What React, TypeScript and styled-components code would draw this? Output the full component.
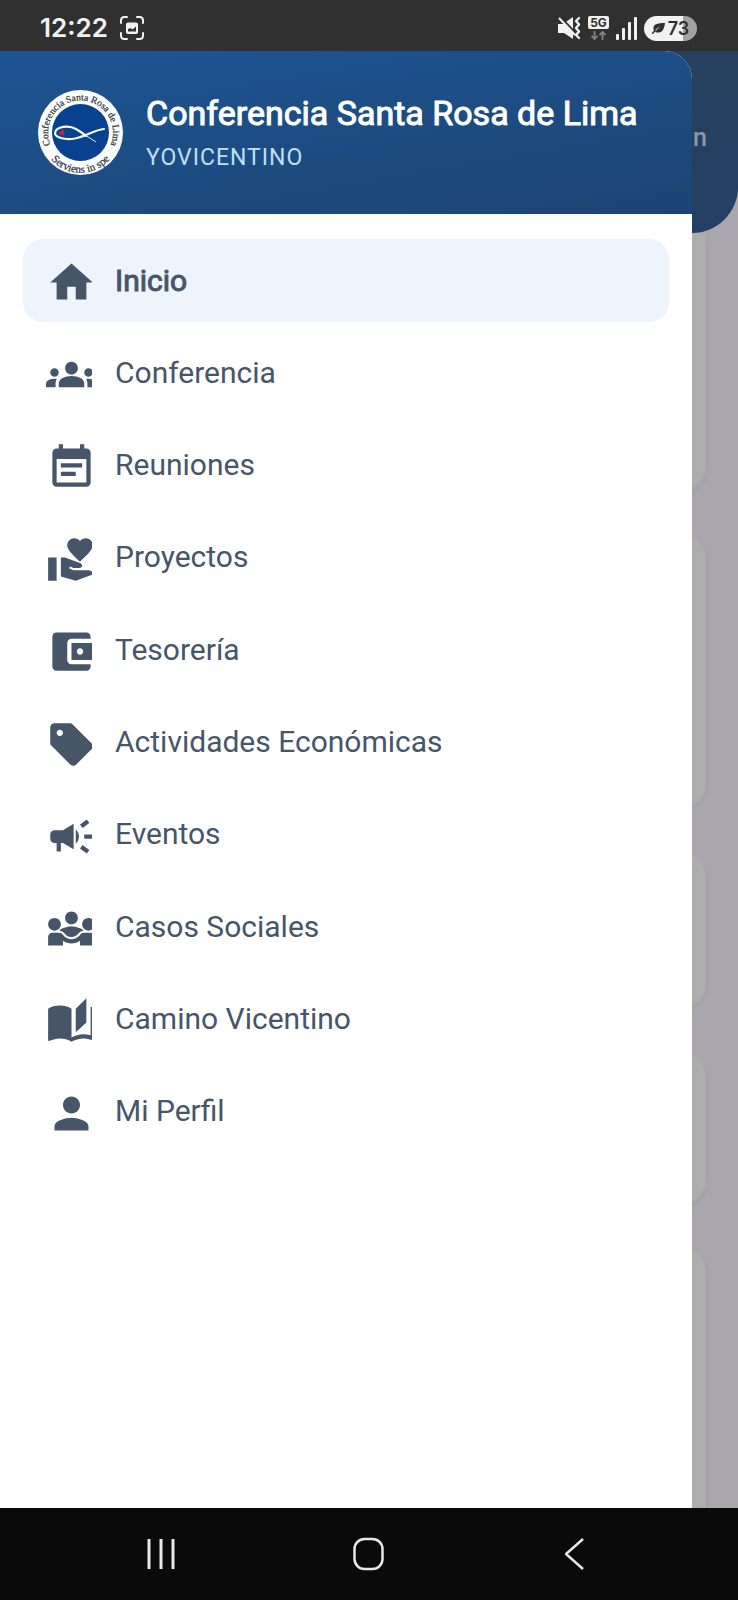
import type { IconType } from "react-icons";
import {
  MdAccountBalanceWallet,
  MdAutoStories,
  MdCampaign,
  MdDiversity3,
  MdEventNote,
  MdGroups,
  MdHome,
  MdPerson,
  MdSell,
  MdVolunteerActivism,
} from "react-icons/md";
import styled, { createGlobalStyle } from "styled-components";

const GlobalStyle = createGlobalStyle`
  * {
    box-sizing: border-box;
  }
  body {
    margin: 0;
    font-family: Roboto, "Liberation Sans", sans-serif;
  }
`

const Screen = styled.div`
  display: flex;
  flex-direction: column;
  min-height: 100vh;
`

const StatusBar = styled.div`
  display: flex;
  align-items: center;
  justify-content: space-between;
  height: 51px;
  padding: 5px 41px 0 40px;
  background: #303030;
  color: #f2f2f2;
`

const StatusGroup = styled.div`
  display: flex;
  align-items: center;
  gap: 7px;
`

const Clock = styled.time`
  margin-right: 5px;
  font-family: Inter, sans-serif;
  font-size: 26px;
  font-weight: 600;
  line-height: 28px;
`

const Battery = styled.div`
  display: flex;
  align-items: center;
  justify-content: center;
  gap: 3px;
  width: 53px;
  height: 25px;
  border-radius: 13px;
  background: linear-gradient(to right, #f2f2f2 73%, #a3a3a3 73%);
  color: #303030;
  font-family: Inter, sans-serif;
  font-size: 18px;
  font-weight: 600;
`

const Content = styled.div`
  position: relative;
  flex: 1;
  display: flex;
  flex-direction: column;
  overflow: hidden;
  background: #a9a7ad;
`

const PageHeader = styled.header`
  display: flex;
  justify-content: flex-end;
  height: 182px;
  padding: 73px 31px 0;
  border-radius: 0 0 46px 46px;
  background: linear-gradient(#27405f, #233f64);
  color: #8c98a8;
  font-size: 25px;
  font-weight: 500;
  line-height: 28px;
`

const CardList = styled.div`
  flex: 1;
  display: flex;
  flex-direction: column;
  gap: 44px;
  padding: 0 32px;
`

const Card = styled.div<{ $height: number }>`
  height: ${({ $height }) => $height}px;
  border-radius: 24px;
  background: #adadae;
  box-shadow: 0 3px 6px rgba(0, 0, 0, 0.05);
  &:first-child {
    border-radius: 0 0 24px 24px;
  }
  &:last-child {
    flex: 1;
    border-radius: 24px 24px 0 0;
  }
`

const Drawer = styled.aside`
  position: absolute;
  inset: 0 46px 0 0;
  border-top-right-radius: 28px;
  overflow: hidden;
  background: white;
`

const DrawerHeader = styled.div`
  display: flex;
  align-items: center;
  gap: 23px;
  height: 163px;
  padding: 0 38px;
  background: linear-gradient(170deg, #1d5593, #1c4473);
`

const Organization = styled.div`
  h1 {
    margin: 0;
    color: white;
    font-size: 34px;
    font-weight: 400;
    line-height: 44px;
    -webkit-text-stroke: 1px;
  }
  p {
    margin: 0;
    padding: 9px 0 3px;
    color: #bfe0f7;
    font-size: 23px;
    letter-spacing: 1px;
    line-height: 28px;
  }
`

const Menu = styled.ul`
  display: flex;
  flex-direction: column;
  justify-content: space-between;
  min-height: 964px;
  margin: 0;
  padding: 25px 23px;
  list-style: none;
`

const MenuLink = styled.a<{ $active: boolean }>`
  display: flex;
  align-items: center;
  gap: 23px;
  height: 83px;
  padding: 0 23px;
  border-radius: 20px;
  background: ${({ $active }) => ($active ? "#edf4fb" : "transparent")};
  color: #475569;
  font-size: 30px;
  line-height: 36px;
  text-decoration: none;
  -webkit-text-stroke: ${({ $active }) => ($active ? 1 : 0)}px;
`

const MenuIcon = styled.span`
  display: flex;
  width: 46px;
  padding-top: 4px;
  overflow: hidden;
  svg {
    flex-shrink: 0;
    width: 51px;
    height: 51px;
  }
`

const NavBar = styled.nav`
  display: flex;
  height: 92px;
  padding: 0 8%;
  background: #0a0a0a;
`

const NavButton = styled.button`
  flex: 1;
  display: flex;
  align-items: center;
  justify-content: center;
  padding: 0;
  border: 0;
  background: none;
  color: #e8e8e8;
`

interface MenuEntry {
  label: string;
  icon: IconType;
}

const menu: MenuEntry[] = [
  { label: "Inicio", icon: MdHome },
  { label: "Conferencia", icon: MdGroups },
  { label: "Reuniones", icon: MdEventNote },
  { label: "Proyectos", icon: MdVolunteerActivism },
  { label: "Tesorería", icon: MdAccountBalanceWallet },
  { label: "Actividades Económicas", icon: MdSell },
  { label: "Eventos", icon: MdCampaign },
  { label: "Casos Sociales", icon: MdDiversity3 },
  { label: "Camino Vicentino", icon: MdAutoStories },
  { label: "Mi Perfil", icon: MdPerson },
];

const cardHeights = [257, 274, 156, 152, 200];

const Logo = () => (
  <svg width="85" height="85" viewBox="0 0 85 85" role="img" aria-label="Conferencia Santa Rosa de Lima">
    <defs>
      <path id="ring-top" d="M13 56.500A32.500 32.500 0 1 1 72 56.500" />
      <path id="ring-bottom" d="M5 54A38.800 38.800 0 0 0 80 54" />
    </defs>
    <circle cx="42.5" cy="42.5" r="42.5" fill="#fff" />
    <circle cx="42.5" cy="42.5" r="28.5" fill="#07418f" />
    <g fill="#26303f" stroke="#26303f" strokeWidth="0.2" fontFamily="Liberation Serif, serif" textAnchor="middle">
      <text fontSize="9.6">
        <textPath href="#ring-top" startOffset="50%">Conferencia Santa Rosa de Lima</textPath>
      </text>
      <text fontSize="11">
        <textPath href="#ring-bottom" startOffset="50%">Serviens in spe</textPath>
      </text>
    </g>
    <path d="M66 39C56 40 49 46 37 48.500C26 50.500 17 47 17 43C18 36 31 35 38 39C43 42 46 44 48 46" fill="none" stroke="#f4f7fb" strokeWidth="2.200" strokeLinecap="round" />
    <path d="M47 45L58 52" stroke="#dce7f5" strokeWidth="1" />
    <path d="M21 43l4-3 1 5z" fill="#d5203c" stroke="#d5203c" />
  </svg>
)

const CaptureIcon = () => (
  <svg width="24" height="24" viewBox="0 0 24 24" fill="none" aria-hidden="true">
    <path d="M1 7V4.500Q1 1 4.500 1H7M17 1h2.500Q23 1 23 4.500V7M23 17v2.500Q23 23 19.500 23H17M7 23H4.500Q1 23 1 19.500V17" stroke="currentColor" strokeWidth="2" strokeLinecap="round" />
    <rect x="6" y="6.500" width="12" height="11.500" rx="2" fill="currentColor" />
    <path d="M8 15.500v-2.500l2.500-1 2 1.500L16 10.500v5z" fill="#303030" />
  </svg>
)

const VibrateIcon = () => (
  <svg width="24" height="24" viewBox="0 0 24 24" aria-hidden="true">
    <path d="M1 8h5L16 1v22L7 17H1z" fill="currentColor" />
    <path d="M4 1.500L18 16.500" stroke="#303030" strokeWidth="2" />
    <path d="M2 2L18 19" stroke="currentColor" strokeWidth="2" />
    <path d="M22 2l-3 3 3 3.500L19 12l3 3.500L19 19l3 3" fill="none" stroke="currentColor" strokeWidth="2.400" strokeLinecap="round" strokeLinejoin="round" />
  </svg>
)

const NetworkIcon = () => (
  <svg width="21" height="25" viewBox="0 0 21 25" aria-label="5G">
    <rect width="21" height="13" rx="2" fill="currentColor" />
    <text x="10.500" y="11" fill="#303030" fontFamily="Inter, sans-serif" fontSize="12" fontWeight="700" textAnchor="middle">5G</text>
    <path d="M6.500 15v8M3.500 20l3 3 3-3M14.500 24v-8M11.500 19l3-3 3 3" fill="none" stroke="#808080" strokeWidth="1.800" />
  </svg>
)

const SignalIcon = () => (
  <svg width="21" height="24" viewBox="0 0 21 24" fill="currentColor" aria-hidden="true">
    <rect y="18" width="3" height="6" rx="1" />
    <rect x="6" y="12" width="3" height="12" rx="1" />
    <rect x="12" y="6" width="3" height="18" rx="1" />
    <rect x="18" y="1" width="3" height="23" rx="1" />
  </svg>
)

const LeafIcon = () => (
  <svg width="13" height="11" viewBox="0 0 13 11" aria-hidden="true">
    <path d="M13 0C6 0 2 1 1.500 4.500Q1.300 6.500 2 8Q5 4.500 9 3.500Q5 5.500 3 9C9 11 12 8 13 0z" fill="currentColor" />
    <path d="M0 11L3.500 7" stroke="currentColor" strokeWidth="1.500" />
  </svg>
)

const App = () => {
  return (
    <Screen>
      <GlobalStyle />
      <StatusBar>
        <StatusGroup>
          <Clock>12:22</Clock>
          <CaptureIcon />
        </StatusGroup>
        <StatusGroup>
          <VibrateIcon />
          <NetworkIcon />
          <SignalIcon />
          <Battery>
            <LeafIcon />
            73
          </Battery>
        </StatusGroup>
      </StatusBar>
      <Content>
        <PageHeader>n</PageHeader>
        <CardList>
          {cardHeights.map((height, i) => (
            <Card key={i} $height={height} />
          ))}
        </CardList>
        <Drawer>
          <DrawerHeader>
            <Logo />
            <Organization>
              <h1>Conferencia Santa Rosa de Lima</h1>
              <p>YOVICENTINO</p>
            </Organization>
          </DrawerHeader>
          <Menu>
            {menu.map(({ label, icon: Icon }, i) => (
              <li key={label}>
                <MenuLink href="#" $active={i === 0}>
                  <MenuIcon><Icon /></MenuIcon>
                  {label}
                </MenuLink>
              </li>
            ))}
          </Menu>
        </Drawer>
      </Content>
      <NavBar>
        <NavButton aria-label="Recientes">
          <svg width="30" height="32" viewBox="0 0 30 32" stroke="currentColor" strokeWidth="3">
            <path d="M2 1v30M14 1v30M26 1v30" />
          </svg>
        </NavButton>
        <NavButton aria-label="Inicio">
          <svg width="32" height="34" viewBox="0 0 32 34" fill="none" stroke="currentColor" strokeWidth="2.500">
            <rect x="1.500" y="2" width="28" height="30" rx="10" />
          </svg>
        </NavButton>
        <NavButton aria-label="Atrás">
          <svg width="22" height="32" viewBox="0 0 22 32" fill="none" stroke="currentColor" strokeWidth="2.500">
            <path d="M18 1L1 16l17 15" />
          </svg>
        </NavButton>
      </NavBar>
    </Screen>
  );
}
export default App;
